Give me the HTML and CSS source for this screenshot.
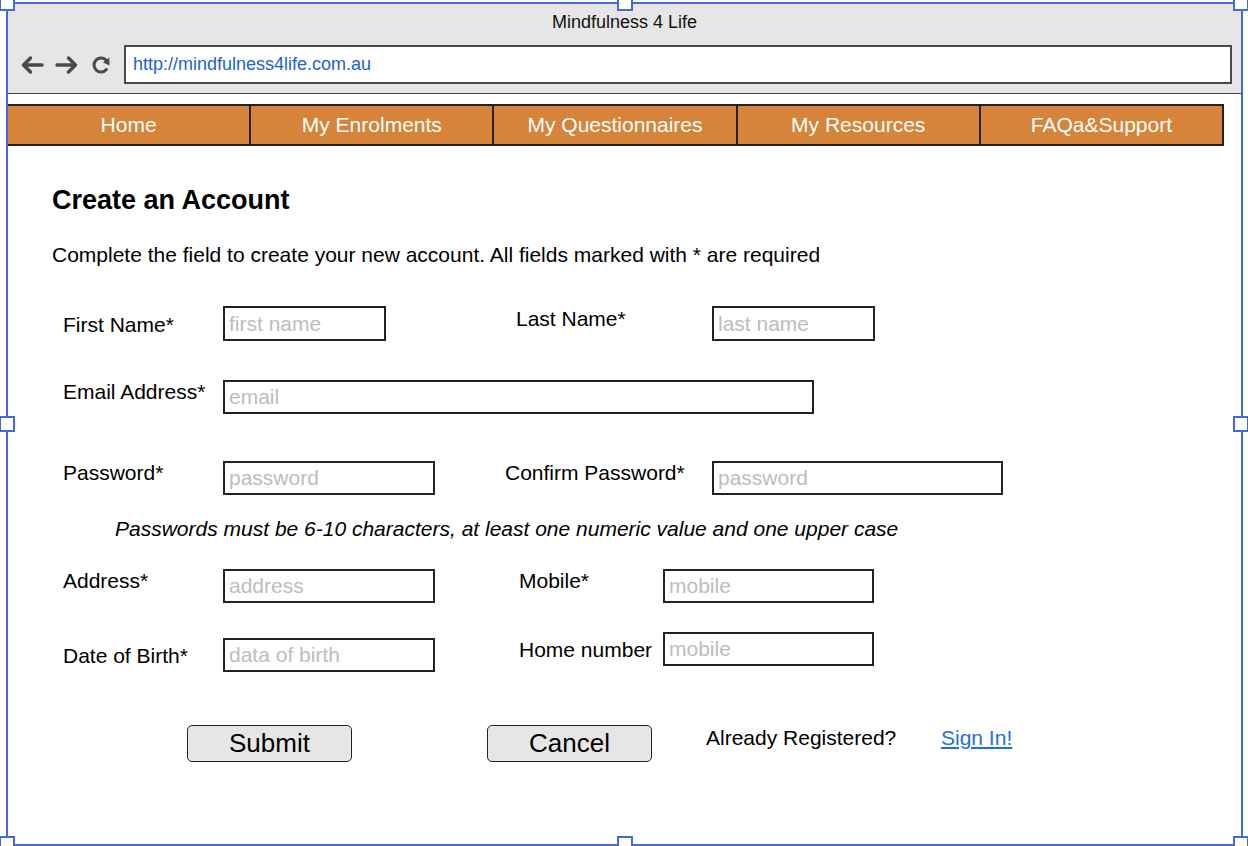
FILE: index.html
```html
<!DOCTYPE html>
<html lang="en">
<head>
  <meta charset="UTF-8" />
  <meta name="viewport" content="width=device-width, initial-scale=1.0"/>
  <title>Mindfulness 4 Life - Create an Account</title>
  <link rel="stylesheet" href="styles.css">
</head>
<body>

  <div class="frame">
    <span class="handle h-tl"></span>
    <span class="handle h-tm"></span>
    <span class="handle h-tr"></span>
    <span class="handle h-ml"></span>
    <span class="handle h-mr"></span>
    <span class="handle h-bl"></span>
    <span class="handle h-bm"></span>
    <span class="handle h-br"></span>

    <div class="chrome">
      <div class="chrome-title">Mindfulness 4 Life</div>
      <div class="chrome-bar">
        <svg class="icon-back" width="24" height="20" viewBox="0 0 24 20">
          <path d="M22 10H3.5M10.5 3L3.5 10L10.5 17" fill="none" stroke="#4a4a4a" stroke-width="3.5" stroke-linecap="round" stroke-linejoin="round"/>
        </svg>
        <svg class="icon-forward" width="24" height="20" viewBox="0 0 24 20">
          <path d="M2 10H20.5M13.5 3L20.5 10L13.5 17" fill="none" stroke="#4a4a4a" stroke-width="3.5" stroke-linecap="round" stroke-linejoin="round"/>
        </svg>
        <svg class="icon-reload" width="21" height="20" viewBox="0 0 21 20">
          <path d="M15.4 14.5A7 7 0 1 1 15.4 5.5" fill="none" stroke="#4a4a4a" stroke-width="3" stroke-linecap="round"/>
          <polygon points="12,7.6 18.2,2.6 18.6,10.4" fill="#4a4a4a"/>
        </svg>
        <div class="url">http://mindfulness4life.com.au</div>
      </div>
    </div>

    <nav class="menu">
      <a href="#">Home</a>
      <a href="#">My Enrolments</a>
      <a href="#">My Questionnaires</a>
      <a href="#">My Resources</a>
      <a href="#">FAQa&amp;Support</a>
    </nav>

    <main class="page">
      <h1>Create an Account</h1>
      <p class="intro">Complete the field to create your new account. All fields marked with * are required</p>

      <form class="signup">
        <div class="row row-names">
          <label class="label">First Name*</label>
          <input class="field" placeholder="first name" />
          <label class="label-right">Last Name*</label>
          <input class="field" placeholder="last name" />
        </div>

        <div class="row row-email">
          <label class="label">Email Address*</label>
          <input class="field" placeholder="email" />
        </div>

        <div class="row row-password">
          <label class="label">Password*</label>
          <input class="field" type="text" placeholder="password" />
          <label class="label-right">Confirm Password*</label>
          <input class="field" type="text" placeholder="password" />
        </div>

        <p class="hint">Passwords must be 6-10 characters, at least one numeric value and one upper case</p>

        <div class="row row-contact">
          <label class="label">Address*</label>
          <input class="field" placeholder="address" />
          <label class="label-right">Mobile*</label>
          <input class="field" placeholder="mobile" />
        </div>

        <div class="row row-birth">
          <label class="label">Date of Birth*</label>
          <input class="field" placeholder="data of birth" />
          <label class="label-right">Home number</label>
          <input class="field" placeholder="mobile" />
        </div>

        <div class="actions">
          <button type="submit" class="btn btn-submit">Submit</button>
          <button type="button" class="btn btn-cancel">Cancel</button>
          <span class="already">Already Registered?</span>
          <a href="#" class="signin">Sign In!</a>
        </div>
      </form>
    </main>
  </div>

</body>
</html>
```

FILE: styles.css
```css
html, body {
  margin: 0;
  overflow: hidden;
  background: #ffffff;
}

body {
  font-family: "Liberation Sans", Arial, Helvetica, sans-serif;
  color: #111;
}

/* selection frame around the mockup */
.frame {
  position: relative;
  box-sizing: border-box;
  margin: 2px 0 0 6px;
  width: 1237px;
  height: 844px;
  border: 2px solid #426ad9;
}

.handle {
  position: absolute;
  z-index: 2;
  width: 12px;
  height: 12px;
  background: #ffffff;
  border: 2px solid #426ad9;
}

.h-tl { left: -9px; top: -9px; }
.h-tm { left: 609px; top: -9px; }
.h-tr { left: 1225px; top: -9px; }
.h-ml { left: -9px; top: 412px; }
.h-mr { left: 1225px; top: 412px; }
.h-bl { left: -9px; top: 832px; }
.h-bm { left: 609px; top: 832px; }
.h-br { left: 1225px; top: 832px; }

/* browser chrome */
.chrome {
  background: #e6e6e6;
  border-bottom: 1px solid #444;
}

.chrome-title {
  height: 41px;
  line-height: 36px;
  text-align: center;
  font-size: 18px;
  color: #111;
}

.chrome-bar {
  display: flex;
  align-items: center;
  height: 39px;
  padding: 0 9px 9px 12px;
}

.icon-forward {
  margin-left: 11px;
}

.icon-reload {
  margin-left: 12px;
}

.url {
  flex: 1;
  box-sizing: border-box;
  height: 39px;
  margin-left: 12px;
  padding-left: 7px;
  line-height: 35px;
  background: #ffffff;
  border: 2px solid #4a4a4a;
  font-size: 18px;
  color: #2061d6;
}

/* top menu */
.menu {
  display: flex;
  margin: 10px 17px 0 0;
  background: #d5843a;
  border-top: 2px solid #222;
  border-bottom: 2px solid #222;
}

.menu a {
  flex: 1;
  height: 38px;
  line-height: 38px;
  text-align: center;
  color: #ffffff;
  font-size: 21px;
  text-decoration: none;
  border-right: 2px solid #222;
}

/* page body */
.page {
  padding-left: 44px;
}

h1 {
  margin: 38px 0 0;
  font-size: 27px;
  line-height: 32px;
  font-weight: bold;
  color: #000;
}

.intro {
  margin: 27px 0 0;
  font-size: 21px;
  line-height: 24px;
  color: #000;
}

.signup {
  font-size: 21px;
}

.row {
  display: flex;
  align-items: flex-start;
  padding-left: 11px;
}

.label,
.label-right {
  line-height: 24px;
  color: #000;
}

.label {
  width: 160px;
}

.field {
  box-sizing: border-box;
  height: 35px;
  margin: 0;
  padding: 0 4px;
  border: 2px solid #222;
  background: #ffffff;
  font-family: "Liberation Sans", Arial, Helvetica, sans-serif;
  font-size: 21px;
  color: #111;
  outline: none;
}

.field::placeholder {
  color: #bdbdbd;
}

.row-names {
  margin-top: 39px;
}

.row-names .label {
  margin-top: 7px;
}

.row-names .field {
  width: 163px;
}

.row-names .label-right {
  width: 196px;
  margin: 1px 0 0 130px;
}

.row-email {
  margin-top: 39px;
}

.row-email .field {
  width: 591px;
  height: 34px;
}

.row-password {
  margin-top: 47px;
}

.row-password .field {
  width: 212px;
  height: 34px;
}

.row-password .label-right {
  width: 207px;
  margin-left: 70px;
}

.row-password .field:last-child {
  width: 291px;
}

.hint {
  margin: 22px 0 0;
  padding-left: 63px;
  font-style: italic;
  line-height: 24px;
  color: #000;
}

.row-contact {
  margin-top: 28px;
}

.row-contact .field,
.row-birth .field {
  width: 212px;
  height: 34px;
}

.row-contact .label-right,
.row-birth .label-right {
  width: 144px;
  margin-left: 84px;
}

.row-contact .field:last-child,
.row-birth .field:last-child {
  width: 211px;
}

.row-birth {
  margin-top: 29px;
}

.row-birth .label {
  margin-top: 12px;
}

.row-birth .field:nth-of-type(1) {
  margin-top: 6px;
}

.row-birth .label-right {
  margin-top: 6px;
}

.actions {
  display: flex;
  align-items: flex-start;
  margin-top: 53px;
  padding-left: 135px;
}

.btn {
  box-sizing: border-box;
  width: 165px;
  height: 37px;
  padding: 0;
  background: #e6e6e6;
  border: 1.5px solid #222;
  border-radius: 5px;
  font-family: "Liberation Sans", Arial, Helvetica, sans-serif;
  font-size: 26px;
  color: #000;
  cursor: pointer;
}

.btn-cancel {
  margin-left: 135px;
}

.already {
  width: 235px;
  margin: 1px 0 0 54px;
  line-height: 24px;
  color: #000;
}

.signin {
  margin-top: 1px;
  line-height: 24px;
  color: #1f6fe5;
  text-decoration: underline;
}
```
